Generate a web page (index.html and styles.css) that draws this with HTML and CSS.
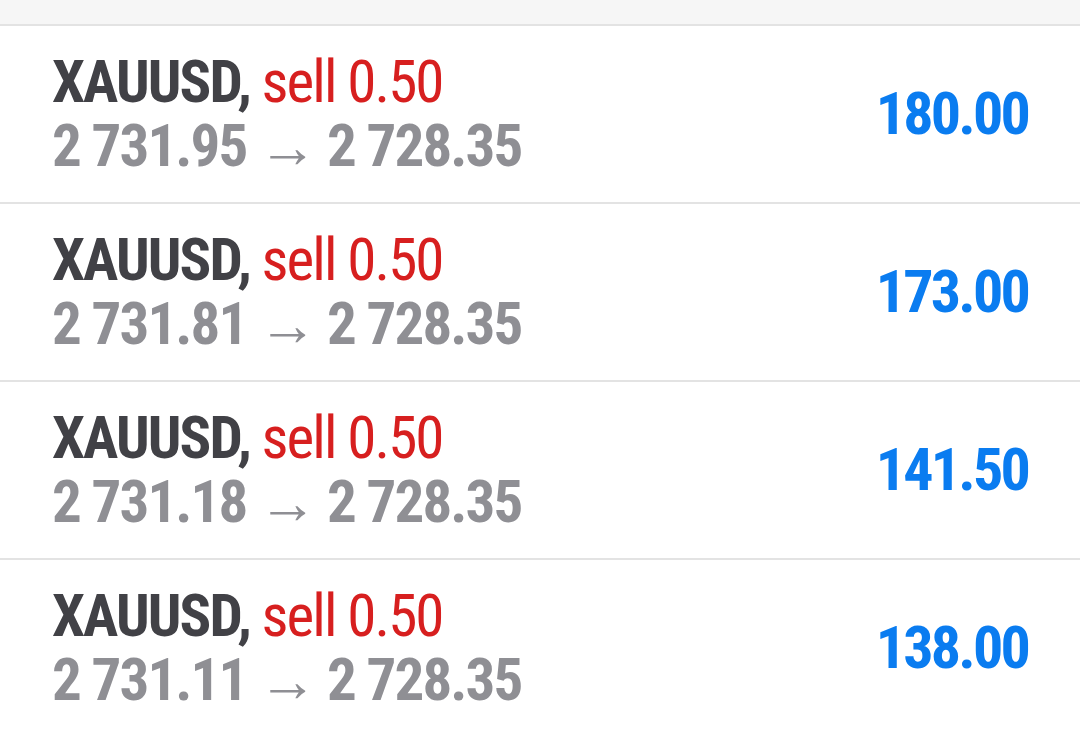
FILE: index.html
```html
<!DOCTYPE html>
<html>
<head>
<meta charset="utf-8">
<link rel="stylesheet" href="styles.css">
</head>
<body>
<div class="topbar"></div>
<ul class="list">
  <li class="row">
    <div class="info">
      <div class="line1"><span class="sym">XAUUSD,</span> <span class="side">sell 0.50</span></div>
      <div class="line2">2 731.95 <span class="arrow">→</span> 2 728.35</div>
    </div>
    <div class="profit">180.00</div>
  </li>
  <li class="row">
    <div class="info">
      <div class="line1"><span class="sym">XAUUSD,</span> <span class="side">sell 0.50</span></div>
      <div class="line2">2 731.81 <span class="arrow">→</span> 2 728.35</div>
    </div>
    <div class="profit">173.00</div>
  </li>
  <li class="row">
    <div class="info">
      <div class="line1"><span class="sym">XAUUSD,</span> <span class="side">sell 0.50</span></div>
      <div class="line2">2 731.18 <span class="arrow">→</span> 2 728.35</div>
    </div>
    <div class="profit">141.50</div>
  </li>
  <li class="row">
    <div class="info">
      <div class="line1"><span class="sym">XAUUSD,</span> <span class="side">sell 0.50</span></div>
      <div class="line2">2 731.11 <span class="arrow">→</span> 2 728.35</div>
    </div>
    <div class="profit">138.00</div>
  </li>
</ul>
</body>
</html>
```
FILE: styles.css
```css
html, body {
  margin: 0;
  padding: 0;
  background: #ffffff;
  overflow: hidden;
}
body {
  font-family: "Roboto Condensed", Roboto, "Liberation Sans", sans-serif;
  font-stretch: condensed;
  width: 1080px;
  height: 732px;
}
.topbar {
  height: 24px;
  background: #f6f6f6;
}
.list {
  list-style: none;
  margin: 0;
  padding: 0;
}
.row {
  display: flex;
  align-items: center;
  justify-content: space-between;
  border-top: 2px solid #e3e3e3;
  padding: 24px 52px 24px 52px;
  height: 128px;
}
.info {
  font-size: 59px;
  line-height: 64px;
  white-space: nowrap;
  letter-spacing: -1.9px;
}
.line1,
.line2 {
  height: 64px;
}
.sym {
  font-weight: 700;
  color: #414146;
}
.side {
  color: #d71f1f;
  font-weight: 400;
}
.line2 {
  color: #8f8f94;
  font-weight: 700;
}
.arrow {
  font-weight: 400;
  vertical-align: -1px;
}
.profit {
  font-size: 60px;
  line-height: 64px;
  font-weight: 700;
  color: #0a7cf0;
  letter-spacing: -2.8px;
}
```
